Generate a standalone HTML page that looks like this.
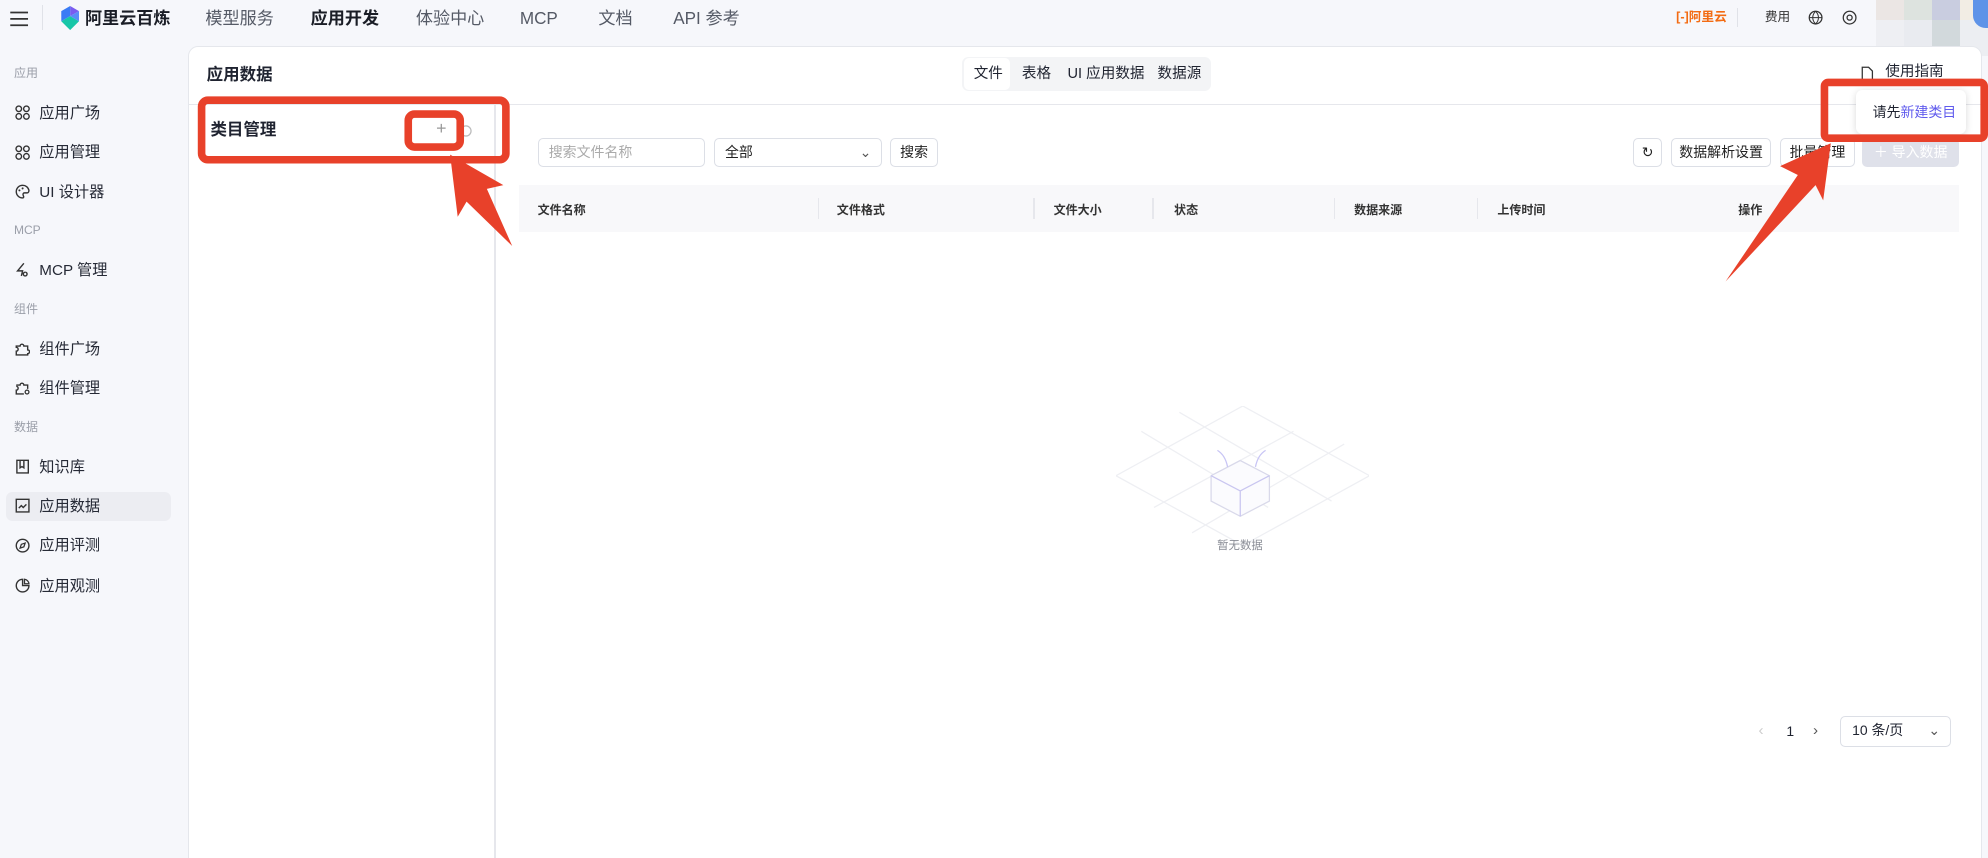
<!DOCTYPE html>
<html><head><meta charset="utf-8"><style>
*{box-sizing:border-box;margin:0;padding:0}
html,body{width:1988px;height:858px;overflow:hidden;background:#f6f7fb}
#root{zoom:1.26786;width:1568px;height:677px;position:relative;font-family:"Liberation Sans","Noto Sans CJK SC",sans-serif;color:#1f2330;background:#f6f7fb;line-height:1.25}
.a{position:absolute;white-space:nowrap}
.nav{font-size:13.5px;color:#555a66;top:6px;line-height:17px}
.sl{font-size:9.5px;color:#9a9ea8;left:11px}
.si{font-size:12px;color:#262a36;left:31px;line-height:15px}
.ic{position:absolute;left:12px;width:12px;height:12px}
.th{font-size:9.5px;font-weight:bold;color:#333;top:160px}
.div{position:absolute;top:156px;width:1px;height:17px;background:#e6e7ec}
.btn{position:absolute;top:109px;height:23px;border:1px solid #dcdfe6;border-radius:4px;background:#fff;font-size:11px;line-height:21px;text-align:center;color:#222}
</style></head><body><div id="root">
<svg class="a" style="left:7px;top:8px" width="16" height="14"><path d="M1 2h14M1 7h14M1 12h14" stroke="#333" stroke-width="1.4"/></svg>
<div class="a" style="left:33px;top:4px;width:1px;height:20px;background:#e0e2e8"></div>
<svg class="a" style="left:47px;top:5px" width="16" height="19" viewBox="0 0 16 19"><path d="M8 0L15 4L8 8Z" fill="#7a5cf0"/><path d="M1 4L8 0L8 8L1 12Z" fill="#3a7bf5"/><path d="M1 12L8 8L15 12L8 19Z" fill="#17c6a8"/><path d="M8 8L15 4L15 12Z" fill="#5a8cf8"/></svg>
<div class="a" style="left:67px;top:6px;font-size:13.5px;font-weight:bold;color:#1a1d26;line-height:17px">阿里云百炼</div>
<div class="a nav" style="left:162px">模型服务</div>
<div class="a nav" style="left:245px;color:#1a1d26;font-weight:bold">应用开发</div>
<div class="a nav" style="left:328px">体验中心</div>
<div class="a nav" style="left:410px">MCP</div>
<div class="a nav" style="left:472px">文档</div>
<div class="a nav" style="left:531px">API 参考</div>
<div class="a" style="left:1322px;top:8px;font-size:10px;color:#f36b12;font-weight:bold">[-]阿里云</div>
<div class="a" style="left:1370px;top:6px;width:1px;height:15px;background:#e0e2e8"></div>
<div class="a" style="left:1392px;top:8px;font-size:10px;color:#333">费用</div>
<svg class="a" style="left:1426px;top:8px" width="12" height="12"><circle cx="6" cy="6" r="5" fill="none" stroke="#333"/><path d="M1 6h10M6 1c-3 3-3 7 0 10M6 1c3 3 3 7 0 10" stroke="#333" fill="none" stroke-width=".8"/></svg>
<svg class="a" style="left:1453px;top:8px" width="12" height="12"><circle cx="6" cy="6" r="5" fill="none" stroke="#333"/><circle cx="6" cy="6" r="2" fill="none" stroke="#333"/></svg>
<div class="a" style="left:1480px;top:0;width:22px;height:16px;background:#ebe6e4"></div>
<div class="a" style="left:1502px;top:0;width:22px;height:16px;background:#dde3df"></div>
<div class="a" style="left:1524px;top:0;width:22px;height:16px;background:#c9cde0"></div>
<div class="a" style="left:1546px;top:0;width:22px;height:16px;background:#f2ede4"></div>
<div class="a" style="left:1480px;top:16px;width:22px;height:28px;background:#eeeff3"></div>
<div class="a" style="left:1502px;top:16px;width:22px;height:28px;background:#e9ebf0"></div>
<div class="a" style="left:1524px;top:16px;width:22px;height:28px;background:#d2d9dc"></div>
<div class="a" style="left:1546px;top:16px;width:22px;height:28px;background:#eceef2"></div>
<div class="a" style="left:1556px;top:0;width:12px;height:22px;background:#5e93e8;border-radius:0 0 0 10px"></div>
<div class="a sl" style="top:52px">应用</div>
<svg class="ic" style="top:83px" viewBox="0 0 12 12"><g fill="none" stroke="#333" stroke-width="1.1"><circle cx="3" cy="3" r="2.2"/><circle cx="9" cy="3" r="2.2"/><circle cx="3" cy="9" r="2.2"/><circle cx="9" cy="9" r="2.2"/></g></svg>
<div class="a si" style="top:82px">应用广场</div>
<svg class="ic" style="top:114px" viewBox="0 0 12 12"><g fill="none" stroke="#333" stroke-width="1.1"><circle cx="3" cy="3" r="2.2"/><circle cx="9" cy="3" r="2.2"/><circle cx="3" cy="9" r="2.2"/><circle cx="9" cy="9" r="2.2"/></g></svg>
<div class="a si" style="top:113px">应用管理</div>
<svg class="ic" style="top:145px" viewBox="0 0 12 12"><path d="M6 1a5 5 0 1 0 0 10c1 0 1-1 .5-2s0-2 1-2h2c1 0 1.5-1 1.5-2A5 5 0 0 0 6 1z" fill="none" stroke="#333" stroke-width="1.1"/><circle cx="3.5" cy="5" r=".8" fill="#333"/><circle cx="6" cy="3.5" r=".8" fill="#333"/></svg>
<div class="a si" style="top:144px">UI 设计器</div>
<div class="a sl" style="top:176px">MCP</div>
<svg class="ic" style="top:207px" viewBox="0 0 12 12"><path d="M7 1L2 7h4l-1 4M8 8a1.5 1.5 0 1 0 .1 0" fill="none" stroke="#333" stroke-width="1.1"/></svg>
<div class="a si" style="top:206px">MCP 管理</div>
<div class="a sl" style="top:238px">组件</div>
<svg class="ic" style="top:269px" viewBox="0 0 12 12"><path d="M1 4h3a1.5 1.5 0 1 1 3 0h3v3a1.5 1.5 0 1 1 0 3v1H1V8a1.5 1.5 0 1 0 0-3z" fill="none" stroke="#333" stroke-width="1.1"/></svg>
<div class="a si" style="top:268px">组件广场</div>
<svg class="ic" style="top:300px" viewBox="0 0 12 12"><path d="M1 4h3a1.5 1.5 0 1 1 3 0h3v3M7 11H1V8a1.5 1.5 0 1 0 0-3" fill="none" stroke="#333" stroke-width="1.1"/><circle cx="9.5" cy="9.5" r="1.5" fill="none" stroke="#333"/></svg>
<div class="a si" style="top:299px">组件管理</div>
<div class="a sl" style="top:331px">数据</div>
<svg class="ic" style="top:362px" viewBox="0 0 12 12"><path d="M1.5 1h9v10h-9zM4 1v6l1.5-1L7 7V1" fill="none" stroke="#333" stroke-width="1.1"/></svg>
<div class="a si" style="top:361px">知识库</div>
<div class="a" style="left:5px;top:388px;width:130px;height:23px;background:#ecedf2;border-radius:5px"></div>
<svg class="ic" style="top:393px" viewBox="0 0 12 12"><path d="M1 1h10v10H1zM3 8l2-2 1.5 1.5L9 5" fill="none" stroke="#333" stroke-width="1.1"/></svg>
<div class="a si" style="top:392px">应用数据</div>
<svg class="ic" style="top:424px" viewBox="0 0 12 12"><circle cx="6" cy="6" r="5" fill="none" stroke="#333" stroke-width="1.1"/><path d="M8 4L5 5 4 8l3-1z" fill="none" stroke="#333"/></svg>
<div class="a si" style="top:423px">应用评测</div>
<svg class="ic" style="top:456px" viewBox="0 0 12 12"><path d="M6 1a5 5 0 1 0 5 5H6z" fill="none" stroke="#333" stroke-width="1.1"/><path d="M7.5 1v3.5H11A4 4 0 0 0 7.5 1z" fill="none" stroke="#333"/></svg>
<div class="a si" style="top:455px">应用观测</div>
<div class="a" style="left:148px;top:36px;width:1415px;height:650px;background:#fff;border:1px solid #e5e7ec;border-radius:8px 8px 0 0"></div>
<div class="a" style="left:163px;top:51px;font-size:13px;font-weight:bold">应用数据</div>
<div class="a" style="left:759px;top:45px;width:196px;height:27px;background:#f3f4f6;border-radius:5px"></div>
<div class="a" style="left:760px;top:46px;width:37px;height:25px;background:#fff;border-radius:4px"></div>
<div class="a" style="left:768px;top:51px;font-size:11.5px">文件</div>
<div class="a" style="left:806px;top:51px;font-size:11.5px">表格</div>
<div class="a" style="left:842px;top:51px;font-size:11.5px">UI 应用数据</div>
<div class="a" style="left:913px;top:51px;font-size:11.5px">数据源</div>
<svg class="a" style="left:1468px;top:52px" width="10" height="12"><path d="M1 1h5l3 3v7H1z" fill="none" stroke="#333"/></svg>
<div class="a" style="left:1487px;top:50px;font-size:11.5px">使用指南</div>
<div class="a" style="left:149px;top:82px;width:1414px;height:1px;background:#e6e7ec"></div>
<div class="a" style="left:390px;top:83px;width:1px;height:600px;background:#e6e7ec"></div>
<div class="a" style="left:166px;top:95px;font-size:13px;font-weight:bold">类目管理</div>
<div class="a" style="left:344px;top:92px;font-size:14px;color:#999">+</div>
<svg class="a" style="left:362px;top:98px" width="11" height="11"><circle cx="5.5" cy="5.5" r="4" fill="none" stroke="#bbb"/></svg>
<div class="btn" style="left:424px;width:132px;text-align:left;padding-left:8px;color:#aaa">搜索文件名称</div>
<div class="btn" style="left:563px;width:133px;text-align:left;padding-left:8px">全部<span style="position:absolute;right:8px;color:#555">⌄</span></div>
<div class="btn" style="left:702px;width:38px">搜索</div>
<div class="btn" style="left:1288px;width:23px">↻</div>
<div class="btn" style="left:1318px;width:79px">数据解析设置</div>
<div class="btn" style="left:1404px;width:59px">批量管理</div>
<div class="btn" style="left:1469px;width:76px;background:#dfe1ea;border-color:#dfe1ea;color:#fff">＋ 导入数据</div>
<div class="a" style="left:409px;top:146px;width:1136px;height:37px;background:#f8f8fa"></div>
<div class="a th" style="left:424px">文件名称</div>
<div class="div" style="left:645px"></div><div class="a th" style="left:660px">文件格式</div>
<div class="div" style="left:815px"></div><div class="a th" style="left:831px">文件大小</div>
<div class="div" style="left:909px"></div><div class="a th" style="left:926px">状态</div>
<div class="div" style="left:1052px"></div><div class="a th" style="left:1068px">数据来源</div>
<div class="div" style="left:1165px"></div><div class="a th" style="left:1181px">上传时间</div>
<div class="a th" style="left:1371px">操作</div>
<svg class="a" style="left:880px;top:320px" width="200" height="110" viewBox="0 0 200 110"><g stroke="#eeeff3" stroke-width="1"><path d="M0 55L100 0M30 80L140 20M60 100L180 30M20 20L120 80M50 5L170 75M100 0L200 55M0 55L100 110M100 110L200 55"/></g><path d="M75 55l23-12 23 12v20l-23 12-23-12z" fill="#fbfbfe" stroke="#d9d9ea"/><path d="M75 55l23 12 23-12M98 67v20" fill="none" stroke="#c9c6f0"/><path d="M80 35c5 3 7 8 8 13M118 35c-5 3-7 8-8 13" stroke="#c7c4f5" fill="none"/></svg>
<div class="a" style="left:960px;top:425px;font-size:9px;color:#8a8d96">暂无数据</div>
<div class="a" style="left:1387px;top:569px;font-size:12px;color:#ccc">‹</div>
<div class="a" style="left:1409px;top:570px;font-size:11px">1</div>
<div class="a" style="left:1430px;top:569px;font-size:12px;color:#555">›</div>
<div class="a" style="left:1451px;top:565px;width:88px;height:24px;border:1px solid #dcdfe6;border-radius:4px;font-size:11px;line-height:22px;padding-left:9px">10 条/页<span style="position:absolute;right:8px;color:#555">⌄</span></div>
<div class="a" style="left:1464px;top:71px;width:87px;height:35px;background:#fff;border-radius:5px;box-shadow:0 1px 6px rgba(0,0,0,.15);font-size:11px;line-height:35px;padding-left:13px">请先<span style="color:#615ced">新建类目</span></div>
<svg class="a" style="left:0;top:0" width="1568" height="677">
<g fill="none" stroke="#e8412a" stroke-width="6"><rect x="159" y="79" width="240" height="47" rx="5"/><rect x="322" y="90" width="41" height="26" rx="5"/><rect x="1439" y="65" width="126" height="44" rx="3"/></g>
<g fill="#e8412a"><path d="M355 122L397 146L384 149L404 194L368 159L361 171Z"/><path d="M1444 113L1438 158L1432 146L1361 222L1418 138L1404 131Z"/></g>
</svg>
</div></body></html>
